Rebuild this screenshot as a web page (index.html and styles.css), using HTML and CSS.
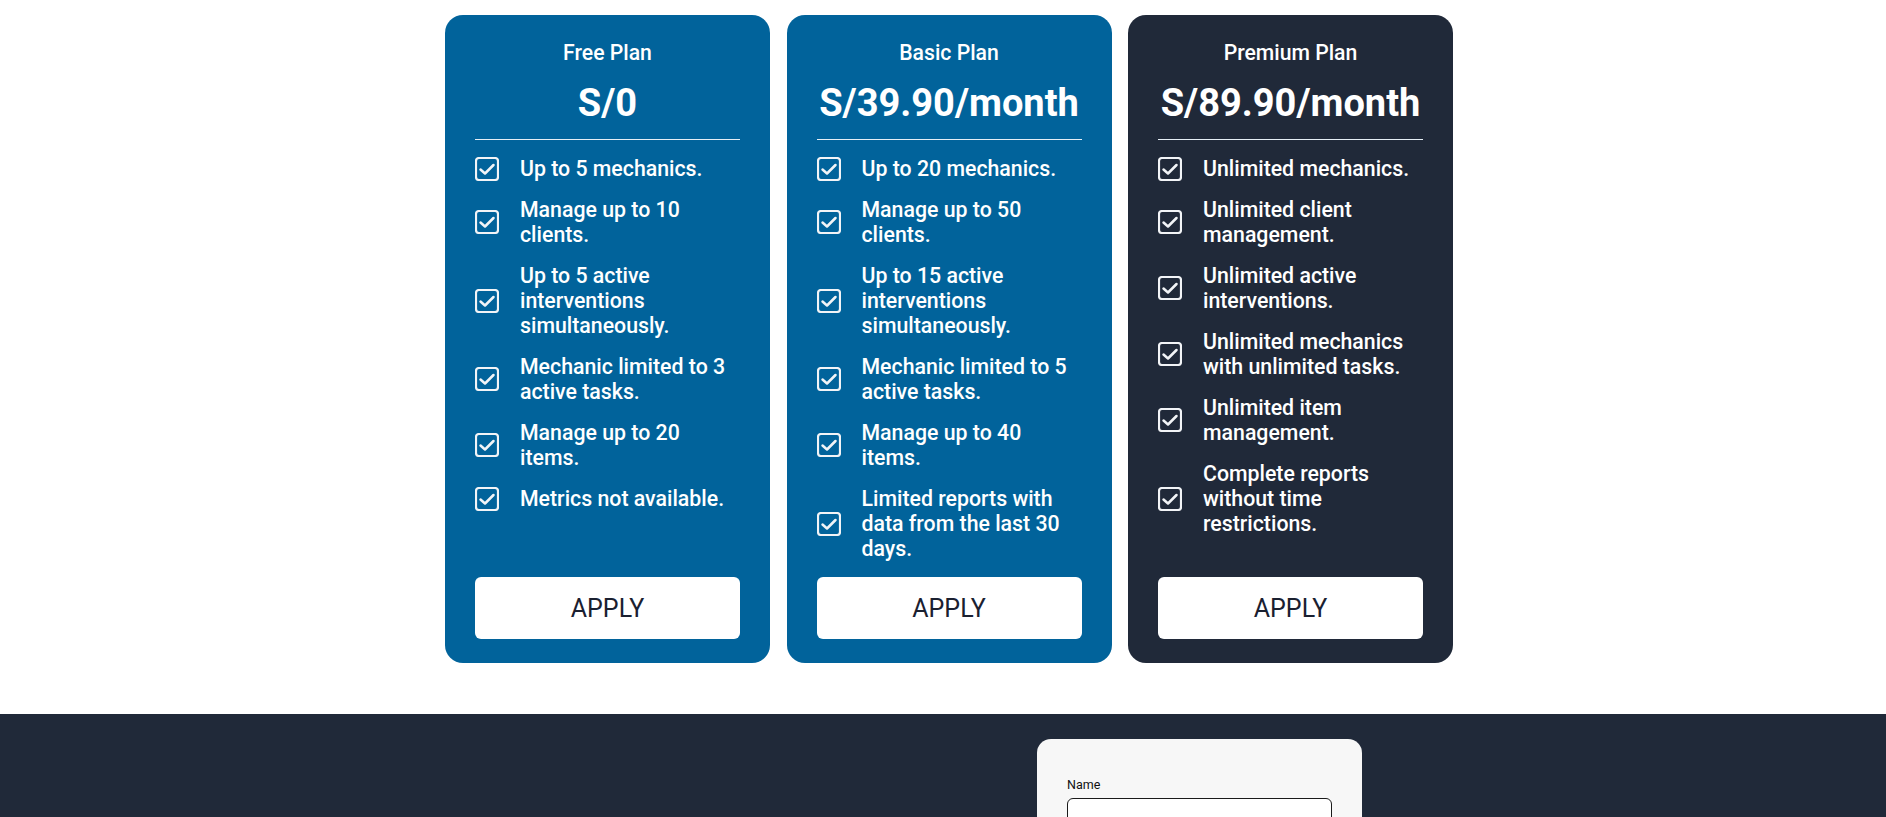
FILE: index.html
```html
<!DOCTYPE html>
<html lang="en">
<head>
<meta charset="utf-8">
<title>Plans</title>
<link rel="stylesheet" href="styles.css">
</head>
<body>
<section class="plans">
  <div class="plan-row">
    <article class="plan plan-blue">
      <h3 class="plan-title">Free Plan</h3>
      <div class="plan-price">S/0</div>
      <hr class="plan-rule">
      <ul class="plan-list">
        <li><svg class="chk" viewBox="0 0 24 24"><rect x="1" y="1" width="22" height="22" rx="3"/><polyline points="5.5,12.5 10,16.5 18.5,8"/></svg><span>Up to 5 mechanics.</span></li>
        <li><svg class="chk" viewBox="0 0 24 24"><rect x="1" y="1" width="22" height="22" rx="3"/><polyline points="5.5,12.5 10,16.5 18.5,8"/></svg><span>Manage up to 10 clients.</span></li>
        <li><svg class="chk" viewBox="0 0 24 24"><rect x="1" y="1" width="22" height="22" rx="3"/><polyline points="5.5,12.5 10,16.5 18.5,8"/></svg><span>Up to 5 active interventions simultaneously.</span></li>
        <li><svg class="chk" viewBox="0 0 24 24"><rect x="1" y="1" width="22" height="22" rx="3"/><polyline points="5.5,12.5 10,16.5 18.5,8"/></svg><span>Mechanic limited to 3 active tasks.</span></li>
        <li><svg class="chk" viewBox="0 0 24 24"><rect x="1" y="1" width="22" height="22" rx="3"/><polyline points="5.5,12.5 10,16.5 18.5,8"/></svg><span>Manage up to 20 items.</span></li>
        <li><svg class="chk" viewBox="0 0 24 24"><rect x="1" y="1" width="22" height="22" rx="3"/><polyline points="5.5,12.5 10,16.5 18.5,8"/></svg><span>Metrics not available.</span></li>
      </ul>
      <button class="plan-btn">APPLY</button>
    </article>
    <article class="plan plan-blue">
      <h3 class="plan-title">Basic Plan</h3>
      <div class="plan-price">S/39.90/month</div>
      <hr class="plan-rule">
      <ul class="plan-list">
        <li><svg class="chk" viewBox="0 0 24 24"><rect x="1" y="1" width="22" height="22" rx="3"/><polyline points="5.5,12.5 10,16.5 18.5,8"/></svg><span>Up to 20 mechanics.</span></li>
        <li><svg class="chk" viewBox="0 0 24 24"><rect x="1" y="1" width="22" height="22" rx="3"/><polyline points="5.5,12.5 10,16.5 18.5,8"/></svg><span>Manage up to 50 clients.</span></li>
        <li><svg class="chk" viewBox="0 0 24 24"><rect x="1" y="1" width="22" height="22" rx="3"/><polyline points="5.5,12.5 10,16.5 18.5,8"/></svg><span>Up to 15 active interventions simultaneously.</span></li>
        <li><svg class="chk" viewBox="0 0 24 24"><rect x="1" y="1" width="22" height="22" rx="3"/><polyline points="5.5,12.5 10,16.5 18.5,8"/></svg><span>Mechanic limited to 5 active tasks.</span></li>
        <li><svg class="chk" viewBox="0 0 24 24"><rect x="1" y="1" width="22" height="22" rx="3"/><polyline points="5.5,12.5 10,16.5 18.5,8"/></svg><span>Manage up to 40 items.</span></li>
        <li><svg class="chk" viewBox="0 0 24 24"><rect x="1" y="1" width="22" height="22" rx="3"/><polyline points="5.5,12.5 10,16.5 18.5,8"/></svg><span>Limited reports with data from the last 30 days.</span></li>
      </ul>
      <button class="plan-btn">APPLY</button>
    </article>
    <article class="plan plan-dark">
      <h3 class="plan-title">Premium Plan</h3>
      <div class="plan-price">S/89.90/month</div>
      <hr class="plan-rule">
      <ul class="plan-list">
        <li><svg class="chk" viewBox="0 0 24 24"><rect x="1" y="1" width="22" height="22" rx="3"/><polyline points="5.5,12.5 10,16.5 18.5,8"/></svg><span>Unlimited mechanics.</span></li>
        <li><svg class="chk" viewBox="0 0 24 24"><rect x="1" y="1" width="22" height="22" rx="3"/><polyline points="5.5,12.5 10,16.5 18.5,8"/></svg><span>Unlimited client management.</span></li>
        <li><svg class="chk" viewBox="0 0 24 24"><rect x="1" y="1" width="22" height="22" rx="3"/><polyline points="5.5,12.5 10,16.5 18.5,8"/></svg><span>Unlimited active interventions.</span></li>
        <li><svg class="chk" viewBox="0 0 24 24"><rect x="1" y="1" width="22" height="22" rx="3"/><polyline points="5.5,12.5 10,16.5 18.5,8"/></svg><span>Unlimited mechanics with unlimited tasks.</span></li>
        <li><svg class="chk" viewBox="0 0 24 24"><rect x="1" y="1" width="22" height="22" rx="3"/><polyline points="5.5,12.5 10,16.5 18.5,8"/></svg><span>Unlimited item management.</span></li>
        <li><svg class="chk" viewBox="0 0 24 24"><rect x="1" y="1" width="22" height="22" rx="3"/><polyline points="5.5,12.5 10,16.5 18.5,8"/></svg><span>Complete reports without time restrictions.</span></li>
      </ul>
      <button class="plan-btn">APPLY</button>
    </article>
  </div>
</section>
<footer class="contact">
  <div class="contact-info"></div>
  <form class="contact-form">
    <label class="field-label" for="name">Name</label>
    <input class="field-input" id="name" type="text">
  </form>
</footer>
</body>
</html>
```

FILE: styles.css
```css
* { box-sizing: border-box; }
html, body { margin: 0; padding: 0; }
body {
  background: #ffffff;
  font-family: Roboto, "Liberation Sans", Arial, sans-serif;
  overflow: hidden;
}
.plans {
  padding: 15px 0 51px 12px;
}
.plan-row {
  display: flex;
  justify-content: center;
  gap: 16.5px;
}
.plan {
  width: 325px;
  border-radius: 18px;
  padding: 26px 30px 24px;
  color: #ffffff;
  display: flex;
  flex-direction: column;
}
.plan-blue { background: #01639b; }
.plan-dark { background: #202939; }
.plan-title {
  margin: 0;
  text-align: center;
  font-size: 21.2px;
  line-height: 24px;
  font-weight: 500;
}
.plan-price {
  margin-top: 16px;
  text-align: center;
  font-size: 38px;
  line-height: 44px;
  font-weight: 700;
  white-space: nowrap;
}
.plan-rule {
  margin: 14px 0 0;
  border: 0;
  height: 1px;
  background: #e6eef5;
}
.plan-list {
  list-style: none;
  margin: 16px 0 16px;
  padding: 0;
  display: flex;
  flex-direction: column;
  gap: 16px;
  flex: 1;
}
.plan-list li {
  display: flex;
  align-items: center;
  gap: 21px;
  font-size: 21.3px;
  line-height: 25px;
  font-weight: 500;
}
.chk {
  flex: none;
  width: 24px;
  height: 24px;
  fill: none;
  stroke: #f2f4f7;
  stroke-width: 2.2;
  stroke-linecap: round;
  stroke-linejoin: round;
}
.chk polyline { stroke-width: 2.5; }
.plan-btn {
  height: 62px;
  width: 100%;
  border: 0;
  border-radius: 6px;
  background: #ffffff;
  color: #1a2030;
  font-family: Roboto, "Liberation Sans", Arial, sans-serif;
  font-size: 25px;
  font-weight: 400;
  cursor: pointer;
}
.contact {
  background: #202939;
  min-height: 300px;
  display: grid;
  grid-template-columns: 1037px 325px 1fr;
  padding-top: 25px;
}
.contact-form {
  grid-column: 2;
  background: #f7f7f7;
  border-radius: 14px;
  padding: 38px 30px 30px;
  display: flex;
  flex-direction: column;
  height: 260px;
}
.field-label {
  font-size: 12.5px;
  line-height: 16px;
  color: #111111;
}
.field-input {
  margin-top: 5px;
  height: 40px;
  border: 1px solid #1a1a1a;
  border-radius: 6px;
  background: #ffffff;
}
```
